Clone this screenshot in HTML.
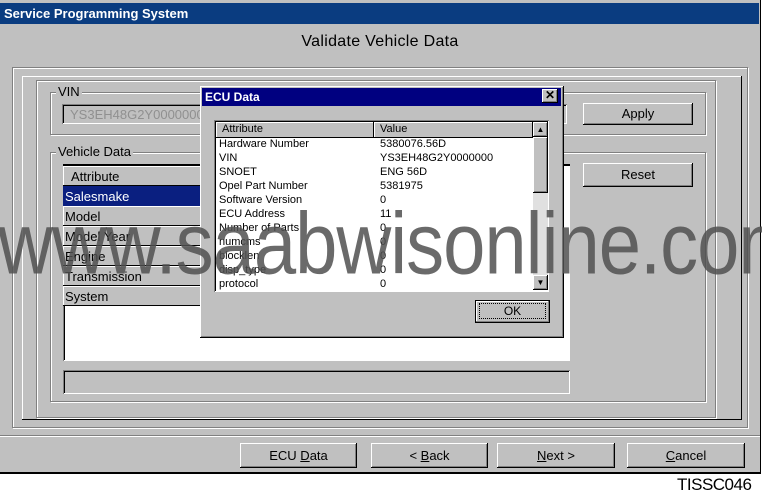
<!DOCTYPE html>
<html><head><meta charset="utf-8"><style>
*{margin:0;padding:0;box-sizing:border-box}
body{width:762px;height:495px;background:#fff;position:relative;overflow:hidden;font-family:"Liberation Sans",Arial,sans-serif;font-size:12px;color:#000}
.a{position:absolute}
.btn{position:absolute;background:#c0c0c0;box-shadow:inset -1px -1px #000,inset 1px 1px #fff,inset -2px -2px #808080;text-align:center;font-size:13px}
.etch{position:absolute;border:1px solid #808080;box-shadow:inset 1px 1px #fff,1px 1px #fff}
.raise{position:absolute;box-shadow:inset -1px -1px #000,inset 1px 1px #fff}
.sunk{position:absolute;box-shadow:inset 1px 1px #808080,inset -1px -1px #fff,inset 2px 2px #000}
.lbl{position:absolute;background:#c0c0c0;padding:0 2px;font-size:13px;color:#000}
.row{position:absolute;left:0;width:140px;height:20px;background:#c0c0c0;box-shadow:inset -1px -1px #000,inset 1px 1px #fff;font-size:13px;padding:3px 2px}
.er{position:absolute;font-size:11px;line-height:14px}
</style></head><body>
<div class="a" style="left:0;top:0;width:761px;height:474px;background:#c0c0c0;border-right:1px solid #000;border-bottom:2px solid #000"></div>
<div class="a" style="left:0;top:3px;width:759px;height:21px;background:#0a3c80;color:#fff;font-weight:bold;font-size:13px;padding:3px 4px">Service Programming System</div>
<div class="a" style="left:0;top:33px;width:760px;text-align:center;font-size:16px;letter-spacing:0.3px">Validate Vehicle Data</div>
<div class="etch" style="left:12px;top:67px;width:736px;height:361px"></div>
<div class="raise" style="left:22px;top:76px;width:720px;height:344px"></div>
<div class="etch" style="left:36px;top:80px;width:680px;height:338px"></div>
<div class="etch" style="left:50px;top:92px;width:656px;height:43px"></div>
<div class="lbl" style="left:56px;top:84px">VIN</div>
<div class="sunk" style="left:62px;top:104px;width:505px;height:20px;background:#c0c0c0;color:#909090;font-size:13px;padding:3px 8px">YS3EH48G2Y0000000</div>
<div class="btn" style="left:583px;top:103px;width:110px;height:22px;padding-top:3px">Apply</div>
<div class="etch" style="left:50px;top:152px;width:656px;height:250px"></div>
<div class="lbl" style="left:56px;top:144px">Vehicle Data</div>
<div class="btn" style="left:583px;top:163px;width:110px;height:24px;padding-top:4px">Reset</div>
<div class="sunk" style="left:63px;top:164px;width:507px;height:197px;background:#fff;overflow:hidden">
 <div class="a" style="left:0;top:0;width:507px;height:2px;background:#000"></div>
 <div class="row" style="top:2px;padding-left:8px">Attribute</div>
 <div class="row" style="top:22px;background:#0a1f80;color:#fff;box-shadow:none">Salesmake</div>
 <div class="row" style="top:42px">Model</div>
 <div class="row" style="top:62px">Model Year</div>
 <div class="row" style="top:82px">Engine</div>
 <div class="row" style="top:102px">Transmission</div>
 <div class="row" style="top:122px">System</div>
</div>
<div class="sunk" style="left:63px;top:370px;width:507px;height:24px;background:#c0c0c0"></div>
<div class="a" style="left:0;top:435px;width:760px;height:2px;border-top:1px solid #808080;border-bottom:1px solid #fff"></div>
<div class="btn" style="left:240px;top:443px;width:117px;height:25px;padding-top:5px">ECU <u>D</u>ata</div>
<div class="btn" style="left:371px;top:443px;width:117px;height:25px;padding-top:5px">&lt; <u>B</u>ack</div>
<div class="btn" style="left:497px;top:443px;width:118px;height:25px;padding-top:5px"><u>N</u>ext &gt;</div>
<div class="btn" style="left:627px;top:443px;width:118px;height:25px;padding-top:5px"><u>C</u>ancel</div>
<div class="a" style="left:677px;top:475px;font-size:17px;letter-spacing:-0.5px">TISSC046</div>

<div class="a" style="left:200px;top:86px;width:364px;height:252px;background:#c0c0c0;box-shadow:inset -1px -1px #000,inset 1px 1px #fff,inset -2px -2px #808080"></div>
<div class="a" style="left:202px;top:88px;width:359px;height:18px;background:#000080;color:#fff;font-weight:bold;font-size:12px;padding:2px 3px">ECU Data</div>
<div class="btn" style="left:542px;top:89px;width:16px;height:14px;font-size:12px;line-height:13px;font-weight:bold">✕</div>
<div class="sunk" style="left:214px;top:120px;width:335px;height:172px;background:#fff;overflow:hidden">
 <div class="a" style="left:2px;top:2px;width:158px;height:16px;background:#c0c0c0;box-shadow:inset -1px -1px #000,inset 1px 1px #fff;font-size:11px;padding:1px 6px">Attribute</div>
 <div class="a" style="left:160px;top:2px;width:159px;height:16px;background:#c0c0c0;box-shadow:inset -1px -1px #000,inset 1px 1px #fff;font-size:11px;padding:1px 6px">Value</div>
 <div class="a" style="left:319px;top:2px;width:15px;height:168px;background:#e0e0e0"></div>
 <div class="btn" style="left:319px;top:2px;width:15px;height:15px;font-size:8px;line-height:15px">▲</div>
 <div class="btn" style="left:319px;top:17px;width:15px;height:56px"></div>
 <div class="btn" style="left:319px;top:155px;width:15px;height:15px;font-size:8px;line-height:15px">▼</div>
 <div class="er" style="left:5px;top:17px">Hardware Number<br>VIN<br>SNOET<br>Opel Part Number<br>Software Version<br>ECU Address<br>Number of Parts<br>numcms<br>blocklen<br>disp_type<br>protocol</div>
 <div class="er" style="left:166px;top:17px">5380076.56D<br>YS3EH48G2Y0000000<br>ENG 56D<br>5381975<br>0<br>11<br>0<br>0<br>0<br>0<br>0</div>
</div>
<div class="btn" style="left:475px;top:300px;width:75px;height:23px;box-shadow:inset -1px -1px #000,inset 1px 1px #000,inset -2px -2px #808080,inset 2px 2px #fff;padding-top:4px;font-size:12px"><span style="outline:1px dotted #000;padding:0 24px">OK</span></div>

<div class="a" style="left:0;top:190px;width:762px;height:110px;overflow:hidden">
<div class="a" style="left:-2px;top:17px;font-size:76px;color:rgba(80,80,80,0.85);white-space:nowrap;transform:scaleY(1.15);transform-origin:0 100%;letter-spacing:-1px">www.saabwisonline.com</div>
</div>
</body></html>
